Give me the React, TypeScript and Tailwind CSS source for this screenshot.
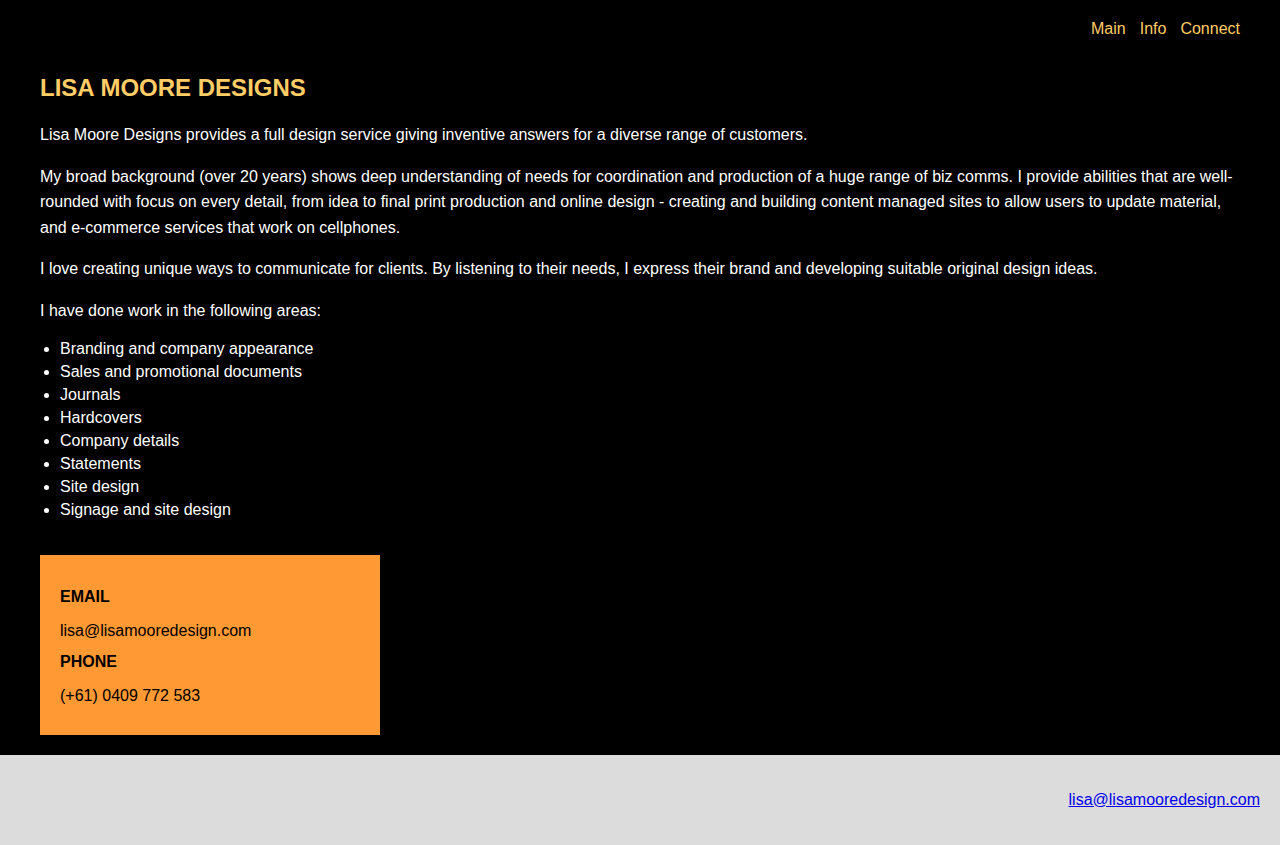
const areas = [
  'Branding and company appearance',
  'Sales and promotional documents',
  'Journals',
  'Hardcovers',
  'Company details',
  'Statements',
  'Site design',
  'Signage and site design',
];

export default function App() {
  return (
    <div className="min-h-screen bg-black font-['Liberation_Sans',Arial,sans-serif] text-base">
      <header className="flex h-14 items-center justify-end gap-[14px] pt-[1px] pr-10">
        <a href="#" className="text-[#ffcc66]">Main</a>
        <a href="#" className="text-[#ffcc66]">Info</a>
        <a href="#" className="text-[#ffcc66]">Connect</a>
      </header>

      <main className="px-10 pb-5 text-white">
        <h1 className="mt-[18px] mb-[20px] text-2xl leading-[28px] font-bold text-[#ffcc66]">LISA MOORE DESIGNS</h1>
        <p className="mb-4 leading-[25.6px]">
          Lisa Moore Designs provides a full design service giving inventive answers for a diverse range of customers.
        </p>
        <p className="mb-4 leading-[25.6px]">
          My broad background (over 20 years) shows deep understanding of needs for coordination and production of a huge range of biz comms. I provide abilities that are well-rounded with focus on every detail, from idea to final print production and online design - creating and building content managed sites to allow users to update material, and e-commerce services that work on cellphones.
        </p>
        <p className="mb-4 leading-[25.6px]">
          I love creating unique ways to communicate for clients. By listening to their needs, I express their brand and developing suitable original design ideas.
        </p>
        <p className="leading-[25.6px]">I have done work in the following areas:</p>
        <ul className="mt-[13px] list-disc pl-5 leading-[23px]">
          {areas.map((a) => (
            <li key={a}>{a}</li>
          ))}
        </ul>

        <div className="mt-[34px] w-[340px] bg-[#ff9933] px-5 pt-[33px] pb-[30px] leading-[18px] text-black">
          <h3 className="font-bold">EMAIL</h3>
          <p className="mt-4">lisa@lisamooredesign.com</p>
          <h3 className="mt-[13px] font-bold">PHONE</h3>
          <p className="mt-4">(+61) 0409 772 583</p>
        </div>
      </main>

      <footer className="flex h-[90px] items-center justify-end bg-[#dcdcdc] pr-5">
        <a href="mailto:lisa@lisamooredesign.com" className="text-[#0000ee] underline">
          lisa@lisamooredesign.com
        </a>
      </footer>
    </div>
  );
}
